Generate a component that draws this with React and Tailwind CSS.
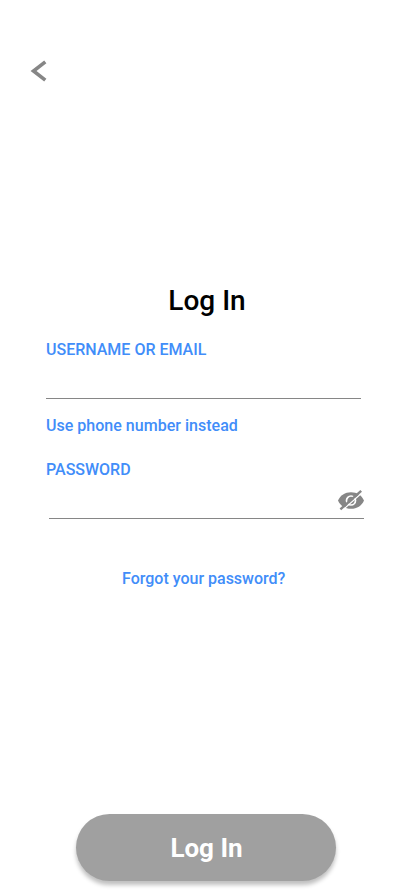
function BackIcon() {
  return (
    <svg className="block h-6 w-5" viewBox="0 0 20 24" fill="none" stroke="#868686" strokeWidth="3.6">
      <path d="M16.3 2.9 4.5 12l11.8 9.100" />
    </svg>
  );
}

function HiddenIcon() {
  return (
    <svg className="block h-[21px] w-[26px]" viewBox="0 0 26 21">
      <path d="M0 10.500C2.400 5.200 7 2.200 13 2.200s10.600 3 13 8.300C23.600 15.800 19 18.800 13 18.800S2.400 15.800 0 10.500Z" fill="#868686" />
      <circle cx="13" cy="10.500" r="4.500" fill="#868686" stroke="#fff" strokeWidth="1.700" />
      <path d="M3.600 21 24.600 2.300" stroke="#fff" strokeWidth="1.200" />
      <path d="M2.400 19.300 23.200 0.900" stroke="#868686" strokeWidth="2.400" />
    </svg>
  );
}

export default function App() {
  return (
    <main className="flex h-[896px] w-[414px] flex-col overflow-hidden bg-white font-['Roboto',sans-serif] text-base leading-5 font-medium text-[#418df9]">
      <header className="h-[285px] pt-[59px] pl-[29px]">
        <button aria-label="Back" className="block">
          <BackIcon />
        </button>
      </header>
      <h1 className="h-[55px] text-center text-[28px] leading-8 font-medium text-black">Log In</h1>
      <form className="flex flex-1 flex-col pl-[46px]">
        <label className="h-[59px] w-[315px] border-b border-[#868686]">USERNAME OR EMAIL</label>
        <a className="mt-[17px] h-[44px] tracking-[0.02px]">Use phone number instead</a>
        <label className="h-[30px]">PASSWORD</label>
        <div className="ml-[3px] flex h-[29px] w-[315px] justify-end border-b border-[#868686]">
          <HiddenIcon />
        </div>
        <a className="mt-[50px] ml-[76px]">Forgot your password?</a>
        <button className="mt-auto mb-[15px] ml-[30px] h-[67px] w-[260px] rounded-full bg-[#a0a0a0] pl-px text-[26px] font-bold text-white shadow-[0_4px_4px_rgba(0,0,0,0.25)]">
          Log In
        </button>
      </form>
    </main>
  );
}
